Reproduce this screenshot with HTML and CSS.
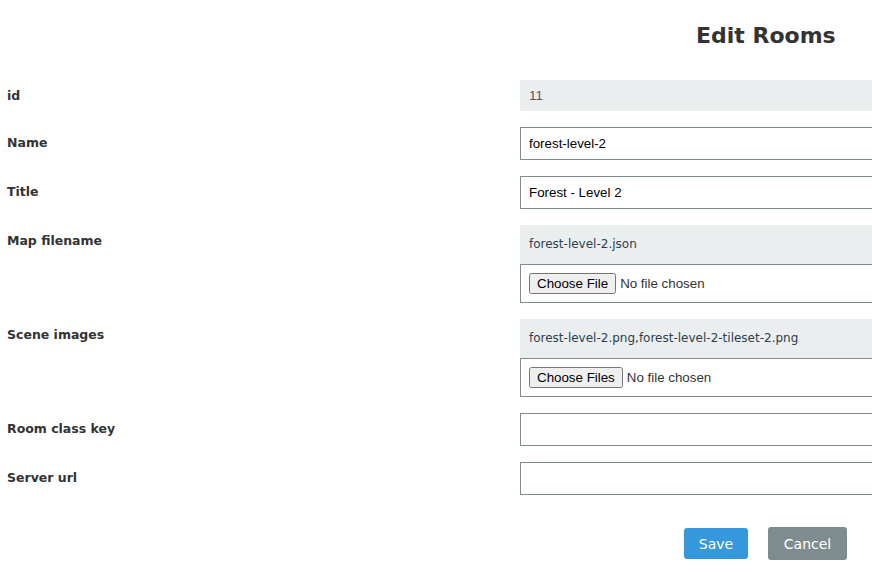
FILE: index.html
```html
<!DOCTYPE html>
<html>
<head>
<meta charset="utf-8">
<link rel="stylesheet" href="styles.css">
</head>
<body>
<div class="page">
  <h1 class="title">Edit Rooms</h1>
  <form class="form">
    <div class="row">
      <label class="label">id</label>
      <div class="field"><div class="readonly id">11</div></div>
    </div>
    <div class="row">
      <label class="label">Name</label>
      <div class="field"><input class="input" type="text" value="forest-level-2"></div>
    </div>
    <div class="row">
      <label class="label">Title</label>
      <div class="field"><input class="input" type="text" value="Forest - Level 2"></div>
    </div>
    <div class="row">
      <label class="label">Map filename</label>
      <div class="field">
        <div class="readonly file-name">forest-level-2.json</div>
        <div class="file-box"><input type="file" class="file"></div>
      </div>
    </div>
    <div class="row">
      <label class="label">Scene images</label>
      <div class="field">
        <div class="readonly file-name">forest-level-2.png,forest-level-2-tileset-2.png</div>
        <div class="file-box"><input type="file" class="file" multiple></div>
      </div>
    </div>
    <div class="row">
      <label class="label">Room class key</label>
      <div class="field"><input class="input" type="text" value=""></div>
    </div>
    <div class="row">
      <label class="label">Server url</label>
      <div class="field"><input class="input" type="text" value=""></div>
    </div>
    <div class="actions">
      <button type="button" class="btn btn-save">Save</button>
      <button type="button" class="btn btn-cancel">Cancel</button>
    </div>
  </form>
</div>
</body>
</html>
```
FILE: styles.css
```css
html, body {
  margin: 0;
  padding: 0;
  overflow: hidden;
  background: #fff;
}
body {
  font-family: "DejaVu Sans", Verdana, sans-serif;
  color: #333;
}
.page {
  width: 1040px;
  padding-left: 7px;
}
.title {
  margin: 0;
  padding-top: 23px;
  height: 80px;
  box-sizing: border-box;
  font-size: 22px;
  font-weight: bold;
  line-height: 26px;
  color: #333;
  padding-left: 689px;
  text-align: left;
}
.form {
  display: flex;
  flex-direction: column;
  gap: 16px;
}
.row {
  display: flex;
  align-items: flex-start;
}
.label {
  width: 513px;
  flex: none;
  font-size: 12.5px;
  font-weight: bold;
  line-height: 14px;
  padding-top: 9px;
  color: #333;
}
.field {
  width: 400px;
  display: flex;
  flex-direction: column;
}
.readonly {
  background: #ebeeef;
  box-sizing: border-box;
  padding: 0 9px;
}
.readonly.id {
  height: 31px;
  line-height: 31px;
  font-family: "Liberation Sans", Arial, sans-serif;
  font-size: 13.33px;
  color: #555;
}
.readonly.file-name {
  height: 39px;
  line-height: 39px;
  font-size: 12px;
  color: #2c3e50;
}
.input {
  box-sizing: border-box;
  height: 33px;
  border: 1px solid #7f8c8d;
  border-radius: 0;
  padding: 0 8px;
  margin: 0;
  font-family: "Liberation Sans", Arial, sans-serif;
  font-size: 13.33px;
  color: #000;
  outline: none;
}
.file-box {
  box-sizing: border-box;
  height: 39px;
  border: 1px solid #7f8c8d;
  padding: 0 8px;
  display: flex;
  align-items: center;
}
.file {
  font-family: "Liberation Sans", Arial, sans-serif;
  font-size: 13.33px;
  color: #333;
}
.actions {
  display: flex;
  align-items: flex-start;
  gap: 20px;
  padding-left: 677px;
  padding-top: 16px;
}
.btn {
  border: none;
  border-radius: 3px;
  color: #fff;
  font-family: "DejaVu Sans", Verdana, sans-serif;
  font-size: 14px;
  padding: 0;
  cursor: pointer;
}
.btn-save {
  width: 64px;
  height: 31px;
  margin-top: 1px;
  background: #3498db;
}
.btn-cancel {
  width: 79px;
  height: 33px;
  background: #7f8c8d;
}
```
